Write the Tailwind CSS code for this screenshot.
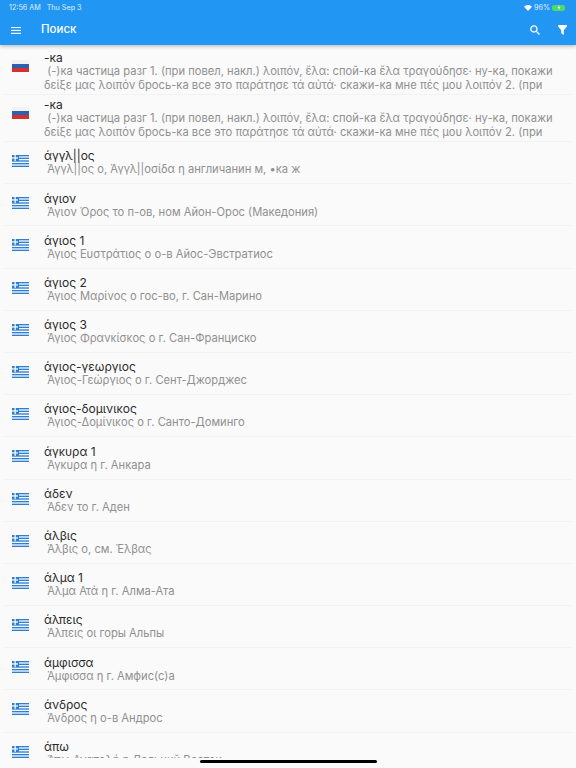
<!DOCTYPE html>
<html lang="ru">
<head>
    <meta charset="UTF-8">
    <meta name="viewport" content="width=device-width, initial-scale=1.0">
    <title>Поиск</title>
    <script src="https://cdn.jsdelivr.net/npm/@tailwindcss/browser@4"></script>
</head>
<body class="bg-[#fafafa] font-['Inter','Noto_Sans',sans-serif] overflow-hidden h-[768px] relative">

    <!-- Шапка -->
    <header class="bg-[#2196f3] h-[45px] text-white shadow-[0_1px_4px_rgba(0,0,0,0.3)] relative z-10">
        <div class="flex justify-between items-center h-[15px] pt-[1px] pl-[9px] pr-[11px] text-[7.200px] text-white/85">
            <div class="flex gap-[6px]"><span>12:56 AM</span><span>Thu Sep 3</span></div>
            <div class="flex items-center gap-[2px]">
                <svg width="8" height="6" viewBox="0 0 24 18" fill="white"><path d="M12 18 0 5c7-6.500 17-6.500 24 0z"/></svg>
                <span>96%</span>
                <span class="w-[13px] h-[6px] rounded-[2px] bg-[#4cd964] flex items-center justify-center">
                    <svg width="4" height="5" viewBox="0 0 8 10" fill="white"><path d="M5 0 1 6h2.500L3 10l4-6H4.500z"/></svg>
                </span>
            </div>
        </div>
        <div class="flex items-center h-[30px] pl-[11px] pr-[9px]">
            <svg width="10" height="7" viewBox="0 0 10 7" fill="white" class="mr-[20px]"><rect width="10" height="1.100" y="0"/><rect width="10" height="1.100" y="2.900"/><rect width="10" height="1.100" y="5.800"/></svg>
            <span class="text-[11.500px] font-medium grow">Поиск</span>
            <svg width="10" height="10" viewBox="0 0 10 10" fill="none" stroke="white" stroke-width="1.300" class="mr-[18px]"><circle cx="3.900" cy="3.900" r="3.100"/><path d="M6.100 6.100 9.500 9.500"/></svg>
            <svg width="9" height="10" viewBox="0 0 9 10" fill="white"><path d="M0 0h9v1.300L5.800 5.200V10L3.200 8.300V5.200L0 1.300z"/></svg>
        </div>
    </header>

    <!-- Результаты -->
    <main id="lista" class="pt-[3px] px-[4px] h-[713px] overflow-hidden"></main>

    <div class="absolute left-[200px] bottom-[5px] w-[177px] h-[3px] rounded-full bg-black z-20"></div>

    <script>
        const ruDesc = "&nbsp;(-)ка частица разг 1. (при повел, накл.) λοιπόν, ἔλα: спой-ка ἔλα τραγούδησε· ну-ка, покажи<br>δείξε μας λοιπόν брось-ка все это παράτησε τά αὐτά· скажи-ка мне πές μου λοιπόν 2. (при";
        const ruFlag = `<svg width="17" height="12" viewBox="0 0 17 12"><rect width="17" height="4" fill="#f2f2f2"/><rect y="4" width="17" height="4" fill="#2f5fb0"/><rect y="8" width="17" height="4" fill="#d2322d"/></svg>`;
        const grFlag = `<svg width="17" height="12" viewBox="0 0 17 12"><rect width="17" height="12" fill="#2f7fd0"/><g fill="#f4f8fc"><rect x="7" y="1.330" width="10" height="1.330"/><rect x="7" y="4" width="10" height="1.330"/><rect y="6.670" width="17" height="1.330"/><rect y="9.330" width="17" height="1.330"/><rect x="2.500" width="1.300" height="6"/><rect y="2.300" width="6" height="1.300"/></g></svg>`;

        const filas = [
            ["-ка", ruDesc, true],
            ["-ка", ruDesc, true],
            ["άγγλ||ος", "Άγγλ||ος ο, Άγγλ||οσίδα η англичанин м, •ка ж"],
            ["άγιον", "Άγιον Όρος το п-ов, ном Айон-Орос (Македония)"],
            ["άγιος 1", "Άγιος Ευστράτιος ο о-в Айос-Эвстратиос"],
            ["άγιος 2", "Άγιος Μαρίνος ο гос-во, г. Сан-Марино"],
            ["άγιος 3", "Άγιος Φρανκίσκος ο г. Сан-Франциско"],
            ["άγιος-γεωργιος", "Άγιος-Γεώργιος ο г. Сент-Джорджес"],
            ["άγιος-δομινικος", "Άγιος-Δομίνικος ο г. Санто-Доминго"],
            ["άγκυρα 1", "Άγκυρα η г. Анкара"],
            ["άδεν", "Άδεν το г. Аден"],
            ["άλβις", "Άλβις ο, см. Έλβας"],
            ["άλμα 1", "Άλμα Ατά η г. Алма-Ата"],
            ["άλπεις", "Άλπεις οι горы Альпы"],
            ["άμφισσα", "Άμφισσα η г. Амфис(с)а"],
            ["άνδρος", "Άνδρος η о-в Андрос"],
            ["άπω", "Άπω Ανατολή η Дальний Восток"]
        ];

        const lista = document.getElementById("lista");
        filas.forEach(([titulo, desc, largo]) => {
            const fila = document.createElement("div");
            fila.className = largo
                ? "flex items-center h-[47px] border-b border-[#f2f2f2]"
                : "flex items-center h-[42.200px] border-b border-[#f2f2f2]";
            fila.innerHTML = `
                <div class="${largo ? "pt-[12px]" : "pt-[13px]"} self-start w-[40px] pl-[8px] shrink-0 flex">${largo ? ruFlag : grFlag}</div>
                <div class="min-w-0 overflow-hidden">
                    <div class="text-[12px] leading-[15px] text-[#2b2b2b]">${titulo}</div>
                    <div class="text-[11.200px] leading-[13.500px] text-[#909090] whitespace-nowrap">${largo ? desc : "&nbsp;" + desc}</div>
                </div>`;
            lista.appendChild(fila);
        });
    </script>

</body>
</html>
